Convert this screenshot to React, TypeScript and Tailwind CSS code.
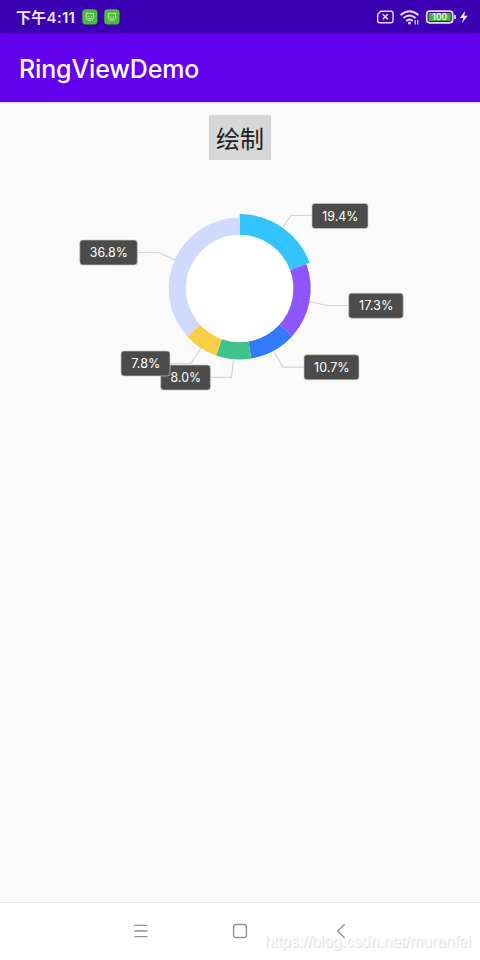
import React from "react"

const CX = 239.7
const CY = 288.5
const INNER = 53.7

const slices = [
    { value: 19.4, color: "#33c4fe", radius: 74.5 },
    { value: 17.3, color: "#8e55fd", radius: 71 },
    { value: 10.7, color: "#317bfa", radius: 71 },
    { value: 8.0, color: "#3dc38b", radius: 71 },
    { value: 7.8, color: "#f9d044", radius: 71 },
    { value: 36.8, color: "#d1d9fc", radius: 71 },
]

const labels = [
    { text: "19.4%", x: 312, y: 203.5, w: 56, tw: 36, line: "283,227 291,215.5 312,215.5" },
    { text: "17.3%", x: 348.7, y: 293.2, w: 54.5, tw: 34.5, line: "310,302 328,305.5 349,305.5" },
    { text: "10.7%", x: 304, y: 354.8, w: 55, tw: 35.5, line: "274,352 283,367.2 304,367.2" },
    { text: "8.0%", x: 160.7, y: 365, w: 49.7, tw: 30.5, line: "233.5,359 231.5,377.3 210,377.3" },
    { text: "7.8%", x: 121, y: 351, w: 49, tw: 29, line: "201,348 191,363.5 170,363.5" },
    { text: "36.8%", x: 79.8, y: 240, w: 57.5, tw: 38, line: "175,260 159,252.5 137,252.5" },
]

function point(angle: number, r: number) {
    const rad = (angle * Math.PI) / 180
    return `${CX + r * Math.sin(rad)} ${CY - r * Math.cos(rad)}`
}

function slicePath(start: number, end: number, r: number) {
    const large = end - start > 180 ? 1 : 0
    return `M${point(start, r)} A${r} ${r} 0 ${large} 1 ${point(end, r)} L${point(end, INNER)} A${INNER} ${INNER} 0 ${large} 0 ${point(start, INNER)}Z`
}

function RingView() {
    let angle = 0
    return (
        <svg viewBox="70 190 340 210" className="mx-auto mt-[30px] block h-[210px] w-[340px]">
            <circle cx={CX} cy={CY} r={INNER + 1} fill="#fff" />
            {slices.map((s) => {
                const start = angle
                angle += s.value * 3.6
                return <path key={s.value} d={slicePath(start, angle, s.radius)} fill={s.color} />
            })}
            {labels.map((l) => (
                <g key={l.text}>
                    <polyline points={l.line} fill="none" stroke="#d4d4d4" strokeWidth="1.2" />
                    <rect x={l.x} y={l.y} width={l.w} height="25" rx="3" fill="#4b4b4b" stroke="#c4c4c4" strokeWidth="0.7" />
                    <text
                        x={l.x + l.w / 2 + 0.3}
                        y={l.y + 17}
                        textAnchor="middle"
                        textLength={l.tw}
                        lengthAdjust="spacingAndGlyphs"
                        fill="#fff"
                        className="font-['Inter',sans-serif] text-[13.5px]"
                    >
                        {l.text}
                    </text>
                </g>
            ))}
        </svg>
    )
}

function Face() {
    return (
        <svg viewBox="0 0 16 16" className="size-4" fill="none">
            <rect x="0.3" y="0.3" width="15.2" height="15.2" rx="3.5" fill="#4dba3a" />
            <path d="M4.6 3.9 6 4.7Q7.9 4.1 9.8 4.7L11.2 3.9 11.8 8Q11.3 11.5 7.9 11.6 4.5 11.5 4 8Z" stroke="#c6efb6" strokeWidth="0.9" />
            <path d="M6.2 6.9v1.2M9.6 6.9v1.2M6.2 9.2q1.7 1 3.4 0" stroke="#d9f5cd" strokeWidth="0.9" />
        </svg>
    )
}

function StatusBar() {
    return (
        <div className="flex h-[34px] items-center justify-between bg-[#3a00b2] pl-4 pr-[11px] text-[#efe6ff]">
            <div className="flex items-center">
                <span className="w-[66px] whitespace-nowrap font-['Inter','Noto_Sans_CJK_SC',sans-serif] text-[15px] font-semibold leading-none tracking-[0.3px]">下午4:11</span>
                <Face />
                <span className="w-[6px]" />
                <Face />
            </div>
            <svg viewBox="376 8 93 18" className="h-[18px] w-[93px]" fill="none" stroke="#e9dcff">
                <path d="M380.7 11.2H391q2 0 2 2v7.6q0 2-2 2h-11.3q-2 0-2-2v-6.5Z" strokeWidth="1.4" />
                <path d="m382.8 14.3 5 5m0-5-5 5" strokeWidth="1.6" />
                <path d="M400.6 15Q409.5 7.4 418.4 15M403.4 18Q409.5 12.9 415.6 18M406.2 20.9Q409.5 18.2 412.8 20.9" strokeWidth="1.9" />
                <circle cx="409.5" cy="23" r="1.5" fill="#e9dcff" stroke="none" />
                <path d="M415.2 20.3v4.2M417.7 20.3v4.2" strokeWidth="1.2" />
                <rect x="426.7" y="11.2" width="26" height="11.6" rx="3" strokeWidth="1.7" />
                <rect x="428.6" y="13" width="22.2" height="8" rx="1" fill="#4caf3c" stroke="none" />
                <path d="M455 15v4" strokeWidth="1.8" />
                <text x="439.7" y="20.1" textAnchor="middle" fill="#f4fff0" stroke="none" className="font-['Inter',sans-serif] text-[8.5px] font-semibold">100</text>
                <path d="M465.2 10.7 459.8 18h3.4l-1.3 5.3 5.9-7.5h-3.6Z" fill="#efe6ff" stroke="none" />
            </svg>
        </div>
    )
}

function NavBar() {
    return (
        <div className="relative flex h-[58px] items-center justify-center border-t border-[#eaeaea] bg-white pb-0.5">
            <svg viewBox="130 920 220 22" className="h-[22px] w-[220px]" fill="none" stroke="#929292" strokeWidth="1.4">
                <path d="M134.3 925.4h13.2M134.3 931h13.2M134.3 936.6h13.2" />
                <rect x="233.6" y="924.5" width="12.8" height="13" rx="2.3" />
                <path d="m344.7 924.3-7 6.7 7 6.9" />
            </svg>
            <span className="absolute right-[9px] top-[28px] whitespace-nowrap font-['Liberation_Sans',sans-serif] text-[16px] leading-[22px] tracking-[-0.12px] text-[#fafafa] [text-shadow:1px_1px_1px_#d8d8d8]">
                https://blog.csdn.net/muranfei
            </span>
        </div>
    )
}

export default function App() {
    return (
        <div className="flex h-[960px] w-[480px] flex-col overflow-hidden bg-[#fafafa]">
            <StatusBar />
            <header className="flex h-[68px] items-center bg-[#6300ee] pl-[19px] pt-[3px] shadow-[0_1px_2px_#d5cfe0]">
                <h1 className="font-['Inter',sans-serif] text-[25px] font-medium tracking-[-0.15px] text-white">RingViewDemo</h1>
            </header>
            <main className="flex-1">
                <button className="ml-[209px] mt-[13px] block h-[45px] w-[62px] bg-[#d7d7d7] font-['Noto_Sans_CJK_SC',sans-serif] text-[24px] leading-[44px] text-[#202020]">
                    绘制
                </button>
                <RingView />
            </main>
            <NavBar />
        </div>
    )
}
